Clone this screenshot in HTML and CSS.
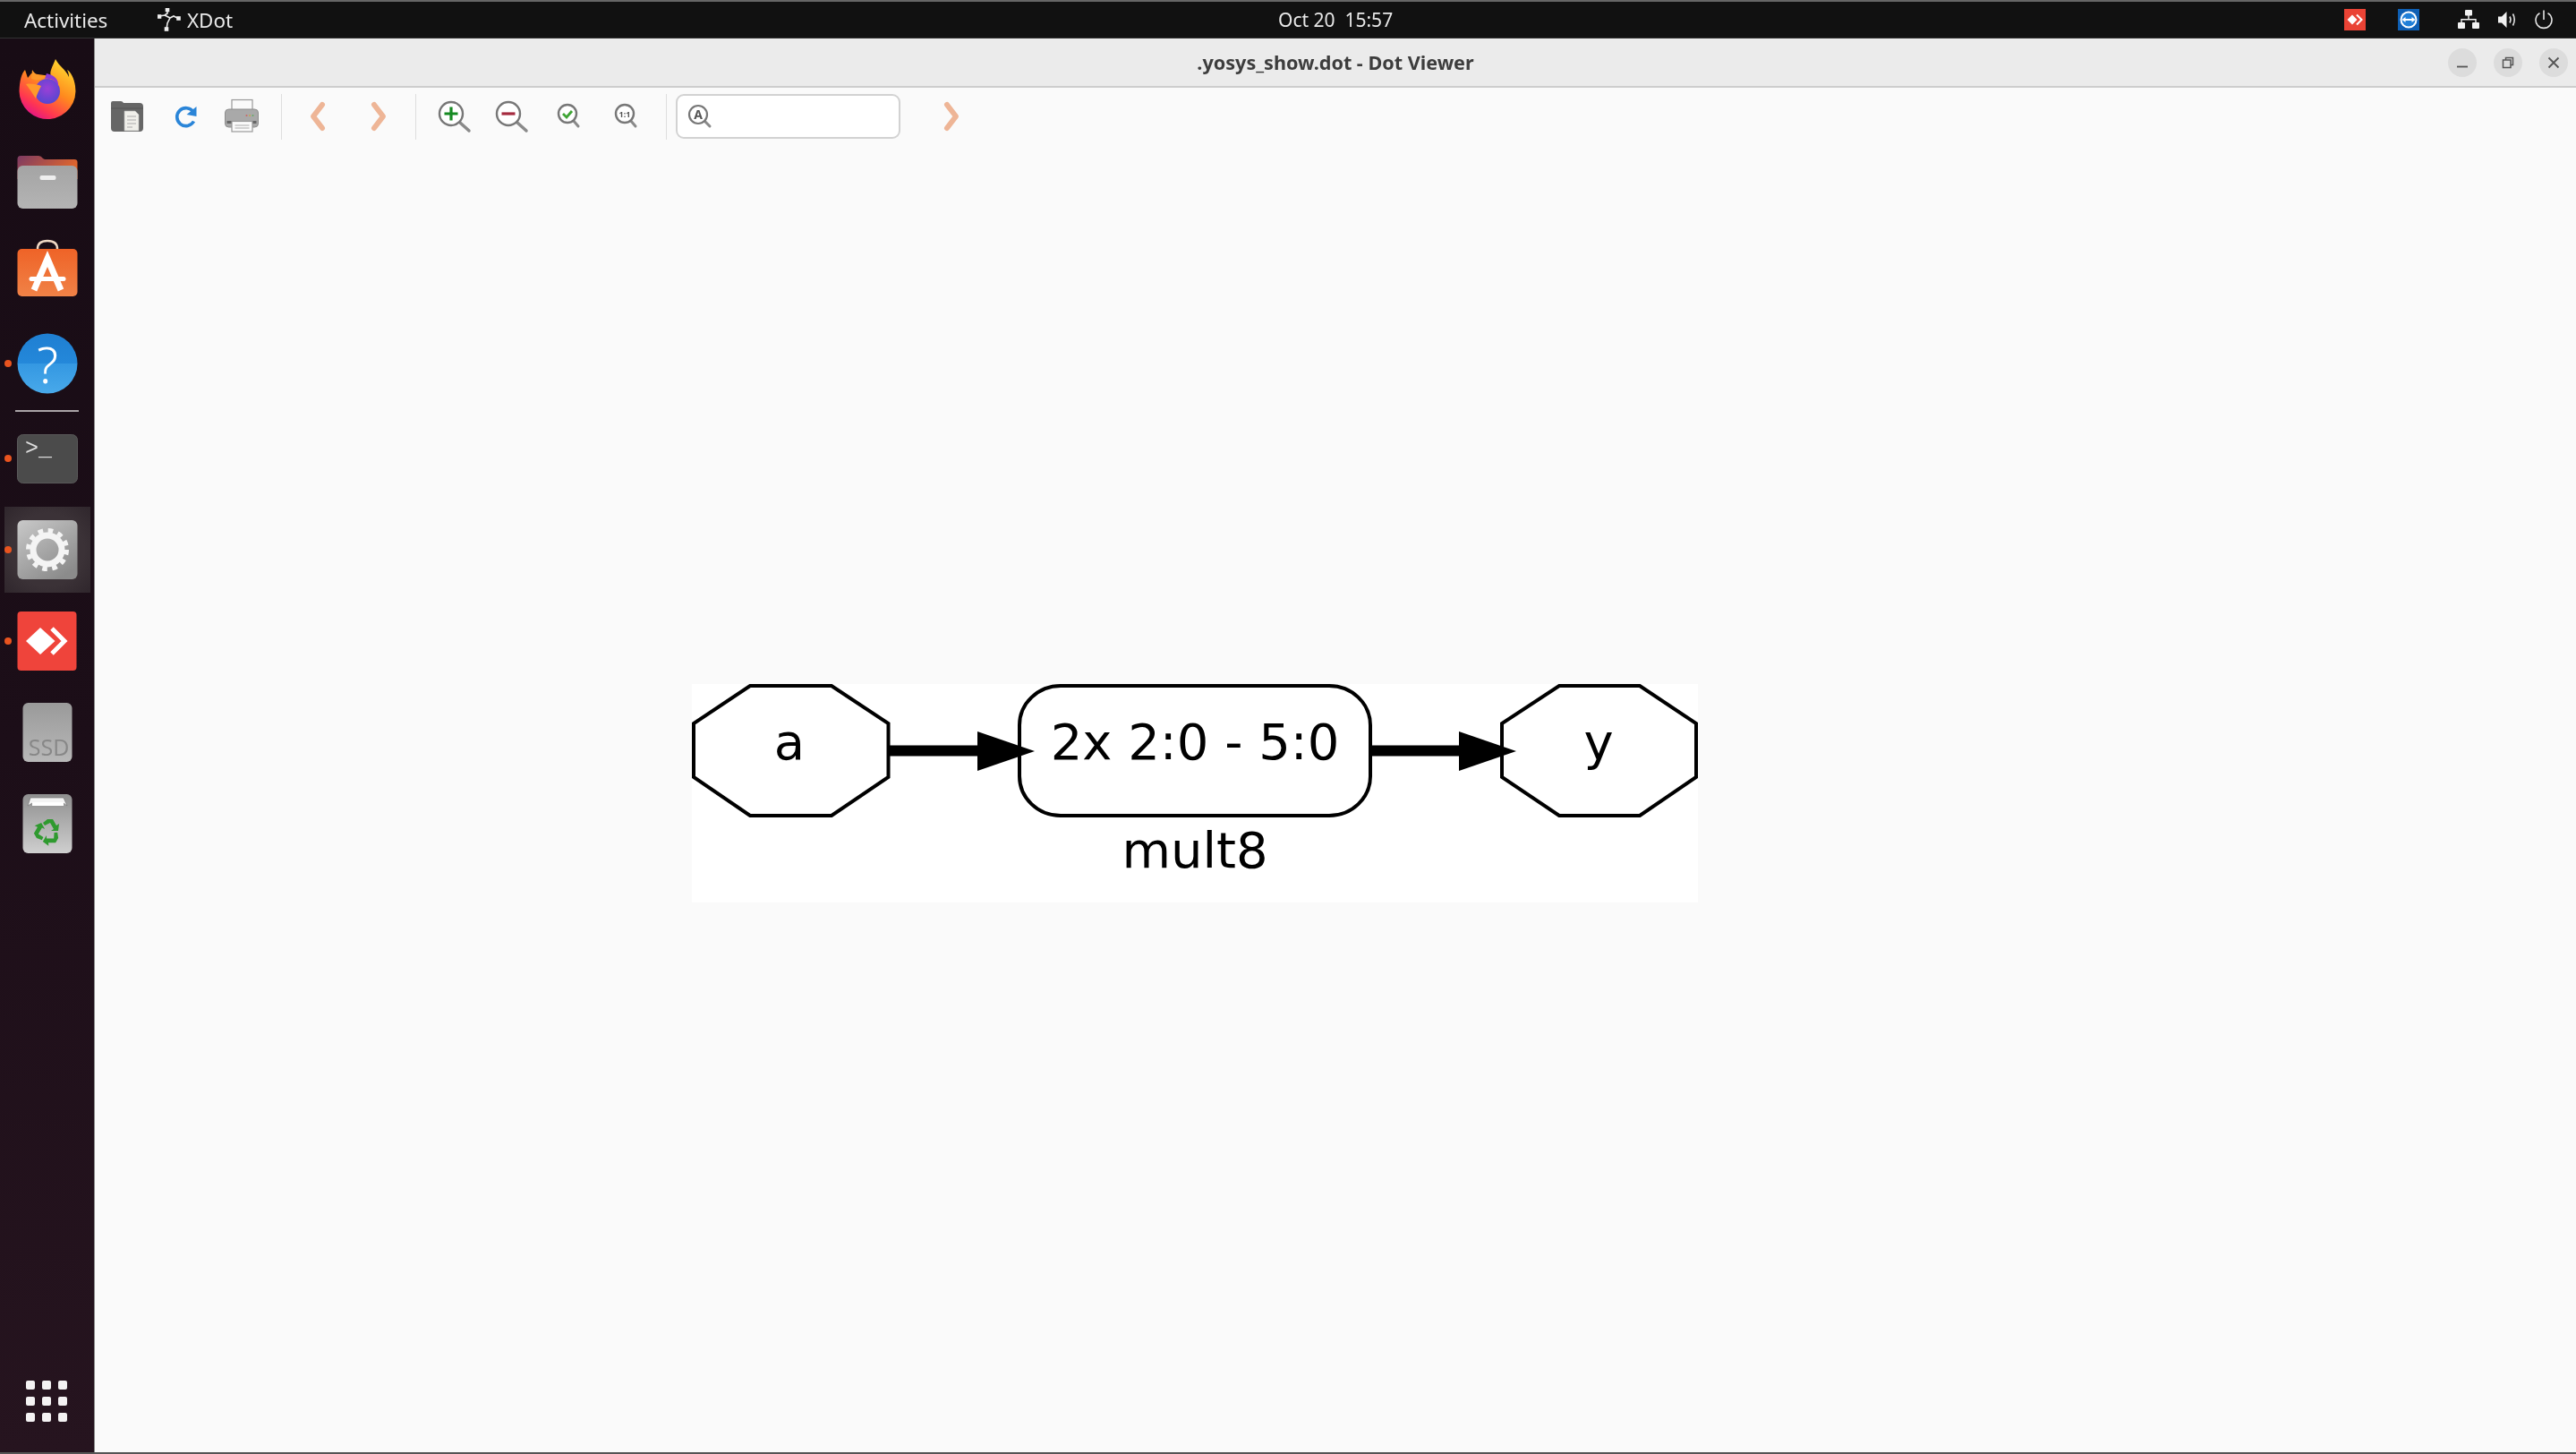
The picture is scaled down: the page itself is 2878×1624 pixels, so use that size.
FILE: index.html
```html
<!DOCTYPE html>
<html lang="en">
<head>
<meta charset="utf-8">
<title>.yosys_show.dot - Dot Viewer</title>
<link rel="stylesheet" href="styles.css">
</head>
<body>
<div class="screen">
  <header class="topbar">
    <div class="top-left">
      <span class="activities">Activities</span>
      <span class="appmenu">
        <svg class="xdot-icon" width="26" height="26" viewBox="0 0 26 26" fill="none" stroke="#eee" stroke-width="1.6"><path d="M11 1 L11 6 L8 8 L2 9 M8 8 L14 11 L18 9 L24 12 M14 11 L11 17 L10 24"/><rect x="9.5" y="0.5" width="3" height="3" fill="#eee"/><rect x="0.5" y="8" width="3" height="3" fill="#eee"/><rect x="22" y="10" width="3" height="3" fill="#eee"/><rect x="8.5" y="22" width="3" height="3" fill="#eee"/></svg>
        XDot
      </span>
    </div>
    <div class="clock">Oct 20&nbsp;&nbsp;15:57</div>
    <div class="tray">
      <svg class="tray-ad" width="24" height="24" viewBox="0 0 24 24"><rect width="24" height="24" fill="#ea4335"/><path d="M9 6.5 L14.5 12 L9 17.5 L3.5 12Z" fill="#fff"/><path d="M14 6.5 L19.5 12 L14 17.5" fill="none" stroke="#fff" stroke-width="2"/></svg>
      <svg class="tray-tv" width="24" height="24" viewBox="0 0 24 24"><rect width="24" height="24" fill="#0e5fb4"/><circle cx="12" cy="12" r="9.5" fill="#fff"/><circle cx="12" cy="12" r="7.5" fill="#1f7fd8"/><path d="M4.5 12 L8.5 9 V11 H15.5 V9 L19.5 12 L15.5 15 V13 H8.5 V15Z" fill="#fff"/></svg>
      <svg class="tray-net" width="24" height="22" viewBox="0 0 24 22" fill="#f2f2f2"><rect x="8" y="0" width="8" height="6.5" rx="1"/><rect x="0" y="14" width="8" height="7" rx="1"/><rect x="16" y="14" width="8" height="7" rx="1"/><path d="M11.3 6 h1.4 v4 H20.7 v5 h-1.4 v-3.6 H4.7 V15 H3.3 v-5 H11.3Z"/></svg>
      <svg class="tray-vol" width="22" height="22" viewBox="0 0 22 22" fill="none"><path d="M1 7.5 H5 L10.5 2 V20 L5 14.5 H1Z" fill="#f2f2f2"/><path d="M14 7.5 Q16 11 14 14.5 M17.5 4.5 Q21 11 17.5 17.5" stroke="#ddd" stroke-width="1.6"/></svg>
      <svg class="tray-pow" width="20" height="22" viewBox="0 0 20 22" fill="none" stroke="#e4e4e4" stroke-width="1.6"><path d="M10 0.5 V11"/><path d="M5.5 3.6 A9 9 0 1 0 14.5 3.6"/></svg>
    </div>
  </header>

  <div class="main">
    <nav class="dock">
      <div class="dock-item">
        <svg width="96" height="96" viewBox="0 0 96 96">
          <defs>
            <linearGradient id="ffBody" x1="0.85" y1="0.1" x2="0.3" y2="1"><stop offset="0" stop-color="#ffd52e"/><stop offset="0.45" stop-color="#ff8a1e"/><stop offset="0.8" stop-color="#ff3750"/><stop offset="1" stop-color="#e31587"/></linearGradient>
            <radialGradient id="ffCore" cx="0.5" cy="0.4" r="0.7"><stop offset="0" stop-color="#9b3fd6"/><stop offset="1" stop-color="#4a48d0"/></radialGradient>
          </defs>
          <path d="M57 14 C53 24 50 28 52 33 L30 30 L26 35 L23 26 C19 30 17 38 16.5 50 A31.5 31.5 0 1 0 79 44 C78 36 74 28 70 26 C72 30 72 33 72 34 C69 26 61 22 57 14Z" fill="url(#ffBody)"/>
          <circle cx="48" cy="50" r="14" fill="url(#ffCore)"/>
          <path d="M47 30 C56 32 61 37 60 45 C58 38 52 35 45 36Z" fill="#8c3bd6"/>
          <path d="M24 42 C30 41 36 42 41 44 C38 50 36 54 35 58 C30 50 27 46 24 42Z M31 26 C34 31 38 33 46 33 C40 38 36 38 30 36Z" fill="#ff9a2a"/>
        </svg>
      </div>
      <div class="dock-item">
        <svg width="96" height="96" viewBox="0 0 96 96">
          <defs>
            <linearGradient id="filesBack" x1="0" y1="0" x2="1" y2="0.4"><stop offset="0" stop-color="#7c3a63"/><stop offset="1" stop-color="#e2672c"/></linearGradient>
            <linearGradient id="filesFront" x1="0" y1="0" x2="0" y2="1"><stop offset="0" stop-color="#a4a4a4"/><stop offset="1" stop-color="#b4b4b4"/></linearGradient>
          </defs>
          <path d="M18 20 H38 Q41 20 43 23 L45 24 H78 Q81.5 24 81.5 27 V46 H14.5 V24 Q14.5 20 18 20Z" fill="url(#filesBack)"/>
          <rect x="14.5" y="31" width="67" height="48" rx="6" fill="url(#filesFront)"/>
          <rect x="39.5" y="42" width="18" height="5" rx="2" fill="#eee"/>
        </svg>
      </div>
      <div class="dock-item software">
        <svg width="96" height="96" viewBox="0 0 96 96">
          <defs><linearGradient id="swBag" x1="0" y1="0" x2="0" y2="1"><stop offset="0" stop-color="#ef6327"/><stop offset="1" stop-color="#f08247"/></linearGradient></defs>
          <path d="M37 24 V22 Q37 13 48 13 Q59 13 59 22 V24" fill="none" stroke="#f0d8c4" stroke-width="2.5"/>
          <rect x="14.5" y="22" width="67" height="53" rx="5" fill="url(#swBag)"/>
          <path d="M33 68 L48 33 L63 68" fill="none" stroke="#fff" stroke-width="7"/>
          <rect x="27.5" y="53" width="41" height="5" rx="2.5" fill="#fff"/>
        </svg>
      </div>
      <div class="dock-item has-dot">
        <svg width="96" height="96" viewBox="0 0 96 96">
          <defs><linearGradient id="helpG" x1="0" y1="0" x2="0" y2="1"><stop offset="0" stop-color="#1f7fd2"/><stop offset="0.5" stop-color="#2488da"/><stop offset="0.5" stop-color="#3498e2"/><stop offset="1" stop-color="#48a9ea"/></linearGradient></defs>
          <circle cx="48" cy="48" r="33.5" fill="url(#helpG)"/>
          <text class="help-mark" x="48" y="69.5" text-anchor="middle">?</text>
        </svg>
      </div>
      <div class="dock-sep"></div>
      <div class="dock-item has-dot">
        <svg width="96" height="96" viewBox="0 0 96 96">
          <rect x="14.5" y="21.5" width="67" height="54" rx="6" fill="#4b4b4b" stroke="#5a5a5a"/>
          <text class="term-mark" x="23" y="44">&gt;_</text>
        </svg>
      </div>
      <div class="dock-item has-dot active">
        <svg width="96" height="96" viewBox="0 0 96 96">
          <defs><linearGradient id="setG" x1="0" y1="0" x2="0.7" y2="1"><stop offset="0" stop-color="#c9c9c9"/><stop offset="1" stop-color="#8b8b8b"/></linearGradient></defs>
          <rect x="14.5" y="15" width="67" height="66" rx="6" fill="url(#setG)"/>
          <circle cx="48" cy="48" r="16" fill="none" stroke="#f4f4f4" stroke-width="7"/>
          <circle cx="48" cy="48" r="21.5" fill="none" stroke="#f4f4f4" stroke-width="5" stroke-dasharray="5.63 5.63"/>
        </svg>
      </div>
      <div class="dock-item has-dot">
        <svg width="96" height="96" viewBox="0 0 96 96">
          <rect x="14.5" y="15" width="66" height="66" rx="4" fill="#ef443b"/>
          <path d="M40 33 L56.5 48 L40 63 L24 48Z" fill="#fff"/>
          <path d="M53 34 L67 48 L53 62" fill="none" stroke="#fff" stroke-width="5"/>
        </svg>
      </div>
      <div class="dock-item">
        <svg width="96" height="96" viewBox="0 0 96 96">
          <defs><linearGradient id="ssdG" x1="0" y1="0" x2="0" y2="1"><stop offset="0" stop-color="#9a9a9a"/><stop offset="1" stop-color="#b8b8b8"/></linearGradient></defs>
          <rect x="20.5" y="15" width="55" height="66" rx="6" fill="url(#ssdG)"/>
          <text class="ssd-mark" x="49.5" y="73.5" text-anchor="middle">SSD</text>
        </svg>
      </div>
      <div class="dock-item">
        <svg width="96" height="96" viewBox="0 0 96 96">
          <defs><linearGradient id="trG" x1="0" y1="0" x2="0" y2="1"><stop offset="0" stop-color="#8f8f8f"/><stop offset="1" stop-color="#cfcfcf"/></linearGradient></defs>
          <rect x="20.5" y="15" width="55" height="66" rx="6" fill="url(#trG)"/>
          <path d="M26 28 L29 19 H66 L70 28 L66 25 H31Z" fill="#f4f4f4" stroke="#777" stroke-width="0.7"/>
          <rect x="31" y="24" width="35" height="4" fill="#fff"/>
          <g fill="#2f9a2f">
            <path id="rec" d="M48 43 L54 43 L58 50 L61 48 L60 56 L52 56 L55 54 L51 47 L45 50 L43 47Z"/>
            <use href="#rec" transform="rotate(120 48 57)"/>
            <use href="#rec" transform="rotate(240 48 57)"/>
          </g>
        </svg>
      </div>
      <div class="dock-spacer"></div>
      <div class="app-grid">
        <i></i><i></i><i></i><i></i><i></i><i></i><i></i><i></i><i></i>
      </div>
    </nav>

    <section class="window">
      <div class="titlebar">
        <div class="title-pad"></div>
        <div class="title">.yosys_show.dot - Dot Viewer</div>
        <div class="win-buttons">
          <span class="win-btn"><svg width="16" height="16" viewBox="0 0 16 16"><path d="M2 12.5 H14" stroke="#555" stroke-width="1.8"/></svg></span>
          <span class="win-btn"><svg width="16" height="16" viewBox="0 0 16 16" fill="none" stroke="#555" stroke-width="1.5"><rect x="2.5" y="5" width="8.5" height="8.5"/><path d="M5.5 5 V2.5 H13.5 V10.5 H11"/></svg></span>
          <span class="win-btn"><svg width="16" height="16" viewBox="0 0 16 16"><path d="M2.5 2.5 L13.5 13.5 M13.5 2.5 L2.5 13.5" stroke="#555" stroke-width="1.8"/></svg></span>
        </div>
      </div>

      <div class="toolbar">
        <span class="tool">
          <svg width="48" height="48" viewBox="0 0 48 48"><path d="M8 7 H17 Q19 7 20 9 H38 Q42 9 42 13 V37 Q42 41 38 41 H10 Q6 41 6 37 V9 Q6 7 8 7Z" fill="#666"/><path d="M6 15 H42" stroke="#555" stroke-width="1"/><path d="M21 18 H33 L37 22 V40 H21Z" fill="#f0efea" stroke="#bbb" stroke-width="0.6"/><path d="M24 24 H34 M24 28 H34 M24 32 H34 M24 36 H30" stroke="#aaa" stroke-width="1.2"/></svg>
        </span>
        <span class="tool">
          <svg width="48" height="48" viewBox="-0.5 0 48 48"><path d="M32.5 19 A10 10 0 1 0 33 29.5" fill="none" stroke="#2a85d8" stroke-width="3.6"/><path d="M36 13 L36 24 L25 22Z" fill="#2a85d8"/></svg>
        </span>
        <span class="tool">
          <svg width="48" height="48" viewBox="1.5 0 48 48"><rect x="13.5" y="5.5" width="23" height="13" fill="#fafafa" stroke="#999" stroke-width="1.2"/><rect x="6" y="16" width="37" height="20" rx="4" fill="#a9a9a9" stroke="#8d8d8d"/><rect x="8" y="29" width="33" height="3" fill="#666"/><circle cx="30" cy="23" r="1" fill="#c66"/><circle cx="33.5" cy="23" r="1" fill="#c9a74c"/><circle cx="37" cy="23" r="1" fill="#6a6"/><rect x="13.5" y="29.5" width="23" height="11.5" fill="#fafafa" stroke="#999" stroke-width="1.2"/><path d="M17 34 H33 M17 37 H33" stroke="#aaa"/></svg>
        </span>
        <span class="tool-sep sep-a"></span>
        <span class="tool wide">
          <svg width="48" height="48" viewBox="0 0 48 48"><path d="M29 11 L19 24 L29 37" fill="none" stroke="#eeb596" stroke-width="6" stroke-linejoin="round" stroke-linecap="round"/></svg>
        </span>
        <span class="tool wide">
          <svg width="48" height="48" viewBox="0 0 48 48"><path d="M19 11 L29 24 L19 37" fill="none" stroke="#eeb596" stroke-width="6" stroke-linejoin="round" stroke-linecap="round"/></svg>
        </span>
        <span class="tool-sep sep-b"></span>
        <span class="tool">
          <svg width="48" height="48" viewBox="0 0 48 48"><path d="M31 31 L41 40" stroke="#8a8a8a" stroke-width="3.5" stroke-linecap="round"/><circle cx="21" cy="21" r="13" fill="#fff" stroke="#777" stroke-width="2.4"/><path d="M21 13.5 V28.5 M13.5 21 H28.5" stroke="#168a22" stroke-width="3.2"/></svg>
        </span>
        <span class="tool">
          <svg width="48" height="48" viewBox="0 0 48 48"><path d="M31 31 L41 40" stroke="#8a8a8a" stroke-width="3.5" stroke-linecap="round"/><circle cx="21" cy="21" r="13" fill="#fff" stroke="#777" stroke-width="2.4"/><path d="M13.5 21 H28.5" stroke="#a52a3f" stroke-width="3.2"/></svg>
        </span>
        <span class="tool">
          <svg width="48" height="48" viewBox="0 0 48 48"><path d="M28 28 L34 35" stroke="#8a8a8a" stroke-width="3" stroke-linecap="round"/><circle cx="22" cy="21" r="10" fill="#fff" stroke="#777" stroke-width="2.4"/><path d="M17 21 L21 25 L27 18" fill="none" stroke="#3fa535" stroke-width="2.8"/></svg>
        </span>
        <span class="tool">
          <svg width="48" height="48" viewBox="0 0 48 48"><path d="M28 28 L34 35" stroke="#8a8a8a" stroke-width="3" stroke-linecap="round"/><circle cx="22" cy="21" r="10" fill="#fff" stroke="#777" stroke-width="2.4"/><text class="lens-11" x="22" y="24.5" text-anchor="middle">1:1</text></svg>
        </span>
        <span class="tool-sep sep-c"></span>
        <div class="search">
          <svg width="28" height="30" viewBox="0 0 28 30"><path d="M18 19 L25 26" stroke="#8a8a8a" stroke-width="3" stroke-linecap="round"/><circle cx="12" cy="13" r="10" fill="#fff" stroke="#777" stroke-width="2.2"/><text class="lens-a" x="12" y="18" text-anchor="middle">A</text></svg>
        </div>
        <span class="tool next">
          <svg width="48" height="48" viewBox="0 0 48 48"><path d="M19 11 L29 24 L19 37" fill="none" stroke="#eeb596" stroke-width="6" stroke-linejoin="round" stroke-linecap="round"/></svg>
        </span>
      </div>

      <div class="canvas">
        <svg class="graph" width="1124" height="244" viewBox="773 764 1124 244">
          <rect x="773" y="764" width="1124" height="244" fill="#fff"/>
          <g fill="#fff" stroke="#000" stroke-width="4">
            <polygon points="838,766 929,766 992.5,808 992.5,868 929,911 838,911 775,868 775,808"/>
            <rect x="1139" y="766" width="392" height="145" rx="46" ry="44"/>
            <polygon points="1742,766 1832,766 1895,808 1895,868 1832,911 1742,911 1678,868 1678,808"/>
          </g>
          <path d="M993 838.5 H1094 M1532 838.5 H1632" stroke="#000" stroke-width="12"/>
          <polygon points="1092,817 1156,839 1092,861" fill="#000"/>
          <polygon points="1630,817 1694,839 1630,861" fill="#000"/>
          <text class="g-label" x="882" y="848" text-anchor="middle">a</text>
          <text class="g-label" x="1335" y="848" text-anchor="middle">2x 2:0 - 5:0</text>
          <text class="g-label" x="1786" y="848" text-anchor="middle">y</text>
          <text class="g-label" x="1335" y="969" text-anchor="middle">mult8</text>
        </svg>
      </div>
    </section>
  </div>
  <div class="bottom-line"></div>
</div>
</body>
</html>
```
FILE: styles.css
```css
* { box-sizing: border-box; }
html, body { margin: 0; padding: 0; }
body { width: 2878px; height: 1624px; overflow: hidden; background: #111; font-family: "Noto Sans", "Open Sans", sans-serif; }
svg { display: block; flex: none; }

.screen { width: 2878px; height: 1624px; display: flex; flex-direction: column; filter: blur(0.5px); }

.topbar { height: 43px; flex: none; display: grid; grid-template-columns: 1428px auto 1fr; align-items: center; background: #111; border-top: 2px solid #666; border-bottom: 1px solid #333; color: #e8e8e8; font-size: 22.4px; }
.top-left { display: flex; align-items: center; padding-left: 27px; }
.activities { width: 149px; }
.appmenu { display: flex; align-items: center; gap: 7px; }
.clock { font-size: 21px; }
.tray { display: flex; align-items: center; justify-content: flex-end; padding-right: 26px; }
.tray-tv { margin-left: 36px; }
.tray-net { margin-left: 43px; }
.tray-vol { margin-left: 20px; }
.tray-pow { margin-left: 20px; }

.main { flex: 1; min-height: 0; display: flex; }

.dock { width: 106px; flex: none; display: flex; flex-direction: column; padding: 6px 0 0 5px; background: linear-gradient(180deg, #180c15 0%, #1c0e18 50%, #26141f 100%); border-right: 1px solid #8a8a8a; }
.dock-item { position: relative; width: 96px; height: 102px; flex: none; display: flex; align-items: center; justify-content: center; }
.has-dot::before { content: ""; position: absolute; left: 0; top: 47px; width: 8px; height: 8px; border-radius: 50%; background: #e9541f; }
.active { background: radial-gradient(circle, #3b3237 60%, #2f262c 100%); height: 96px; margin: 3px 0; }
.active::before { top: 44px; }
.active svg { position: relative; }
.dock-sep { height: 4px; flex: none; display: flex; align-items: center; }
.dock-sep::after { content: ""; display: block; margin-left: 12px; width: 71px; height: 2px; background: #aaa4a7; }
.dock-spacer { flex: 1; }
.app-grid { display: grid; grid-template-columns: repeat(3, 10px); gap: 8px; padding: 0 0 34px 24px; }
.app-grid i { display: block; width: 10px; height: 10px; border-radius: 2px; background: #f4f2f3; }
.help-mark { font: 300 56px "Noto Sans", sans-serif; fill: #fff; }
.term-mark { font: 25px "Liberation Mono", monospace; fill: #ddd; }
.ssd-mark { font: 25px "Open Sans", sans-serif; fill: #878787; }

.window { flex: 1; min-width: 0; display: flex; flex-direction: column; background: #fafafa; }
.titlebar { height: 55px; flex: none; display: grid; grid-template-columns: 1fr auto 1fr; align-items: center; background: #ebebeb; border-bottom: 2px solid #cdcdcd; }
.title { font-size: 21.6px; font-weight: 700; color: #3d3d3d; }
.win-buttons { display: flex; justify-content: flex-end; gap: 19px; padding-right: 9px; }
.win-btn { width: 32px; height: 32px; border-radius: 50%; background: #dcdcdc; display: flex; align-items: center; justify-content: center; }

.toolbar { height: 64px; flex: none; display: flex; align-items: center; padding-left: 4px; }
.tool { width: 64.5px; height: 48px; flex: none; display: flex; justify-content: center; }
.tool.wide { width: 68px; }
.tool.next { width: 64px; margin-left: 25px; }
.tool-sep { width: 1px; height: 51px; flex: none; background: #dedede; }
.sep-a { margin: 0 6px 0 10px; }
.sep-b { margin: 0 10px 0 7px; }
.sep-c { margin: 0 10px 0 11px; }
.search { width: 251px; height: 50px; flex: none; display: flex; align-items: center; padding-left: 11px; background: #fff; border: 2px solid #d2d2d2; border-radius: 9px; }
.lens-11 { font: 700 9px "Noto Sans", sans-serif; fill: #555; }
.lens-a { font: 700 14px "Noto Sans", sans-serif; fill: #555; }

.canvas { flex: 1; position: relative; min-height: 0; }
.graph { position: absolute; left: 667px; top: 602px; }
.g-label { font: 56px "DejaVu Sans", sans-serif; fill: #000; }

.bottom-line { height: 2px; flex: none; background: #555; }
```
